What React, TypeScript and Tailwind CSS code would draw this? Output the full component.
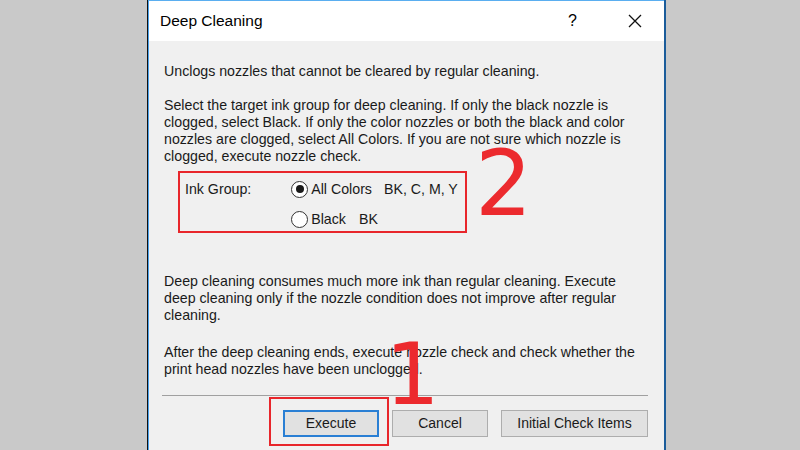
import React from "react";

function Radio({ checked }: { checked?: boolean }) {
  return (
    <span className="w-[17px] h-[17px] rounded-full border border-[#333] bg-white flex items-center justify-center shrink-0">
      {checked && <span className="w-[8px] h-[8px] rounded-full bg-[#1a1a1a]" />}
    </span>
  );
}

export default function App() {
  return (
    <div className="w-[800px] h-[450px] bg-[#c9c9c9] flex overflow-hidden font-['Liberation_Sans',sans-serif] text-[#1a1a1a]">
      <div className="ml-[147px] w-[519px] h-[450px] border-l border-l-[#111] border-r-2 border-r-[#1b5c9a] flex">
        <div className="flex-1 border-l border-l-[#4aa3ee] border-t border-t-[#5aaef0] flex flex-col">
          <div className="h-[40px] bg-white flex items-center pl-[11px] pr-[22px] shrink-0">
            <span className="text-[15.5px] text-black">Deep Cleaning</span>
            <span className="ml-auto text-[16px] text-black mr-[51px]">?</span>
            <svg width="14" height="14" viewBox="0 0 14 14" className="shrink-0">
              <path d="M1 1 L13 13 M13 1 L1 13" stroke="#111" strokeWidth="1.3" />
            </svg>
          </div>
          <div className="flex-1 bg-[#f0f0f0] px-[15px] pt-[22px] text-[14.2px] leading-[17px] relative">
            <p>Unclogs nozzles that cannot be cleared by regular cleaning.</p>
            <p className="mt-[17px]">
              Select the target ink group for deep cleaning. If only the black nozzle is
              <br />
              clogged, select Black. If only the color nozzles or both the black and color
              <br />
              nozzles are clogged, select All Colors. If you are not sure which nozzle is
              <br />
              clogged, execute nozzle check.
            </p>
            <div className="mt-[6px] ml-[14px] w-[289px] h-[62px] border-2 border-[#e8262b] flex">
              <div className="pl-[5px] pt-[8px]">Ink Group:</div>
              <div className="ml-[40px] pt-[7px] flex flex-col gap-[12px]">
                <div className="flex items-center h-[18px]">
                  <Radio checked />
                  <span className="ml-[3px]">All Colors</span>
                  <span className="ml-[12px]">BK, C, M, Y</span>
                </div>
                <div className="flex items-center h-[18px]">
                  <Radio />
                  <span className="ml-[3px]">Black</span>
                  <span className="ml-[13px]">BK</span>
                </div>
              </div>
            </div>
            <p className="mt-[40px]">
              Deep cleaning consumes much more ink than regular cleaning. Execute
              <br />
              deep cleaning only if the nozzle condition does not improve after regular
              <br />
              cleaning.
            </p>
            <p className="mt-[20px]">
              After the deep cleaning ends, execute nozzle check and check whether the
              <br />
              print head nozzles have been unclogged.
            </p>
            <div className="mt-[17px] h-px bg-[#a0a0a0] mr-[1px] ml-[-2px]" />
            <div className="mt-[14px] flex justify-end gap-[13px] text-[14px] mr-[1px]">
              <div className="relative">
                <button className="w-[96px] h-[27px] bg-[#e1e1e1] border-2 border-[#2a7fd4] flex items-center justify-center">
                  Execute
                </button>
                <div className="absolute left-[-14px] top-[-13px] w-[120px] h-[49px] border-2 border-[#e8262b]" />
              </div>
              <button className="w-[96px] h-[27px] bg-[#e1e1e1] border border-[#adadad] flex items-center justify-center">
                Cancel
              </button>
              <button className="w-[147px] h-[27px] bg-[#e1e1e1] border border-[#adadad] flex items-center justify-center">
                Initial Check Items
              </button>
            </div>
            <span className="absolute left-[326px] top-[98px] text-[90px] leading-none text-[#ec2a2e] font-['DejaVu_Sans',sans-serif]">
              2
            </span>
            <span className="absolute left-[236px] top-[290px] text-[86px] leading-none text-[#ec2a2e] font-['DejaVu_Sans',sans-serif]">
              1
            </span>
          </div>
        </div>
      </div>
    </div>
  );
}
